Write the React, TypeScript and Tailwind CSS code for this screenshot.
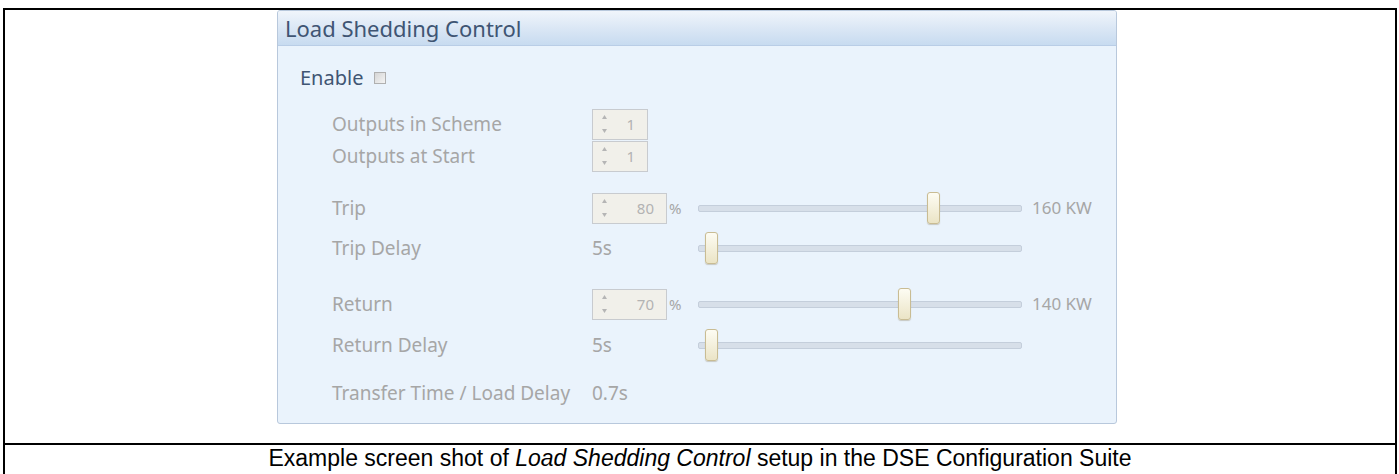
import React from "react";

function Spin({ value, w }: { value: string; w: string }) {
  return (
    <div className={`${w} h-[31px] border border-[#c8cbcf] bg-[#f1f0ea] flex items-center relative`}>
      <div className="flex flex-col justify-between h-[18px] ml-[9px]">
        <svg width="5" height="4" viewBox="0 0 5 4"><path d="M0 4 L2.5 0 L5 4Z" fill="#b5b5b5" /></svg>
        <svg width="5" height="4" viewBox="0 0 5 4"><path d="M0 0 L2.5 4 L5 0Z" fill="#b5b5b5" /></svg>
      </div>
      <div className="flex-1 text-right pr-[12px] text-[15px] text-[#b3b3b3]">{value}</div>
    </div>
  );
}

function Slider({ left }: { left: string }) {
  return (
    <div className="relative w-[324px] h-[32px] flex items-center">
      <div className="w-full h-[7px] bg-[#d7dfe9] border border-[#c4cedb] rounded-[2px]" />
      <div className={`absolute top-0 ${left} w-[13px] h-[32px] rounded-[3px] border border-[#c9bc93] bg-gradient-to-b from-[#fdfcf3] to-[#ebe4c6] shadow-[0_1px_1px_rgba(120,100,60,0.3)]`} />
    </div>
  );
}

export default function App() {
  const font = { fontFamily: '"Noto Sans", "Open Sans", sans-serif' };
  return (
    <div className="w-[1399px] h-[474px] overflow-hidden bg-white pt-[8px] pl-[3px] pr-[2px]">
      <div className="border-2 border-black">
        <div className="h-[433px] pl-[272px]">
          <div
            className="w-[840px] h-[414px] border border-[#b8c8dc] rounded-[3px] bg-[#eaf3fc] flex flex-col overflow-hidden"
            style={font}
          >
            <div className="h-[35px] bg-gradient-to-b from-[#f0f5fb] via-[#dbe7f5] to-[#c7dbf0] border-b border-[#b9cde6] flex items-center pl-[7px]">
              <span className="text-[22px] leading-none text-[#3f5573]">Load Shedding Control</span>
            </div>
            <div className="flex flex-col text-[19px] text-[#a6a6a6]">
              <div className="h-[26px] mt-[19px] flex items-center pl-[22px] gap-[11px]">
                <span className="text-[#3f5573] text-[20px]">Enable</span>
                <div className="w-[12px] h-[12px] border border-[#b0b0b0] bg-gradient-to-br from-[#d6d6d6] to-[#f4f4f4]" />
              </div>
              <div className="mt-[17px] flex flex-col pl-[54px]">
                <div className="h-[32px] flex items-center">
                  <span className="w-[260px]">Outputs in Scheme</span>
                  <Spin value="1" w="w-[56px]" />
                </div>
                <div className="h-[32px] flex items-center">
                  <span className="w-[260px]">Outputs at Start</span>
                  <Spin value="1" w="w-[56px]" />
                </div>
                <div className="h-[32px] mt-[20px] flex items-center">
                  <span className="w-[260px]">Trip</span>
                  <Spin value="80" w="w-[75px]" />
                  <span className="w-[31px] text-[15px] pl-[2px]">%</span>
                  <Slider left="left-[229px]" />
                  <span className="ml-[10px] text-[17px]">160 KW</span>
                </div>
                <div className="h-[32px] mt-[8px] flex items-center">
                  <span className="w-[260px]">Trip Delay</span>
                  <span className="w-[106px]">5s</span>
                  <Slider left="left-[7px]" />
                </div>
                <div className="h-[32px] mt-[24px] flex items-center">
                  <span className="w-[260px]">Return</span>
                  <Spin value="70" w="w-[75px]" />
                  <span className="w-[31px] text-[15px] pl-[2px]">%</span>
                  <Slider left="left-[200px]" />
                  <span className="ml-[10px] text-[17px]">140 KW</span>
                </div>
                <div className="h-[32px] mt-[9px] flex items-center">
                  <span className="w-[260px]">Return Delay</span>
                  <span className="w-[106px]">5s</span>
                  <Slider left="left-[7px]" />
                </div>
                <div className="h-[32px] mt-[16px] flex items-center">
                  <span className="w-[260px]">Transfer Time / Load Delay</span>
                  <span>0.7s</span>
                </div>
              </div>
            </div>
          </div>
        </div>
        <div
          className="border-t-2 border-black h-[40px] pt-0 text-center text-[23px] leading-[26px] text-black"
          style={{ fontFamily: '"Liberation Sans", Arial, sans-serif' }}
        >
          Example screen shot of <i>Load Shedding Control</i> setup in the DSE Configuration Suite
        </div>
      </div>
    </div>
  );
}
